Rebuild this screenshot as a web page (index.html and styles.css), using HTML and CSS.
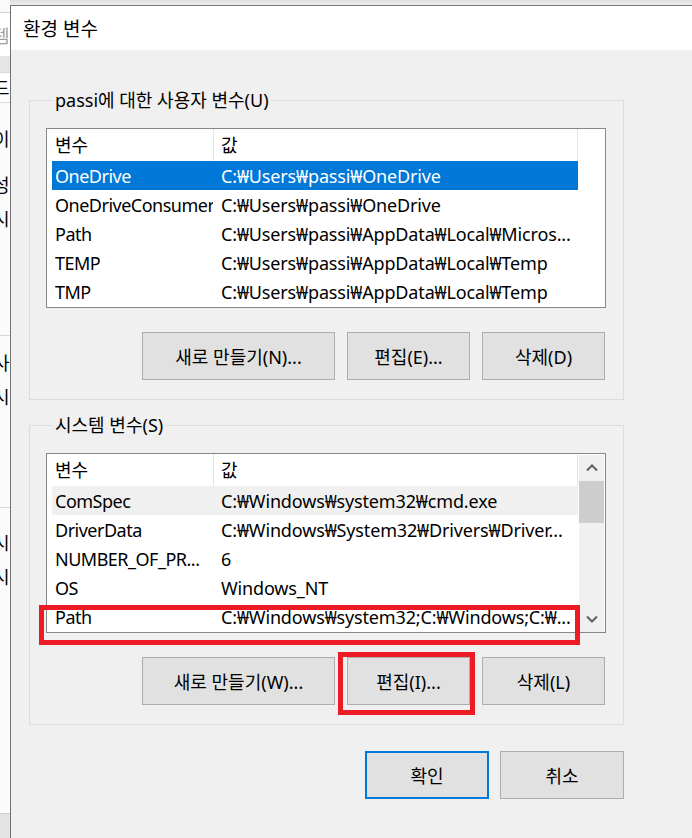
FILE: index.html
```html
<!DOCTYPE html>
<html lang="ko">
<head>
<meta charset="utf-8">
<title>환경 변수</title>
<link rel="stylesheet" href="styles.css">
</head>
<body>
<div class="screen">
  <div class="behind">
    <div class="bh-top"></div>
    <div class="bh-tabs"><span class="bh-ch faint">템</span></div>
    <div class="bh-band"></div>
    <div class="bh-tab"><span class="bh-ch">드 E</span></div>
    <div class="bh-panel">
      <span class="bh-ch l1">이</span>
      <span class="bh-ch l2">성</span>
      <span class="bh-ch l3">시</span>
      <div class="bh-sep s1"></div>
      <span class="bh-ch l4">사</span>
      <span class="bh-ch l5">시</span>
      <div class="bh-sep s2"></div>
      <span class="bh-ch l6">시</span>
      <span class="bh-ch l7">시</span>
    </div>
    <div class="bh-bottom"></div>
  </div>

  <div class="dialog">
    <div class="titlebar">환경 변수</div>
    <div class="dlg-body">
      <fieldset class="group">
        <legend>passi에 대한 사용자 변수(U)</legend>
        <div class="list">
          <div class="list-main">
            <div class="list-head">
              <div class="hc hc1">변수</div>
              <div class="hc hc2">값</div>
            </div>
            <div class="row sel"><span class="c1">OneDrive</span><span class="c2">C:₩Users₩passi₩OneDrive</span></div>
            <div class="row"><span class="c1">OneDriveConsumer</span><span class="c2">C:₩Users₩passi₩OneDrive</span></div>
            <div class="row"><span class="c1">Path</span><span class="c2">C:₩Users₩passi₩AppData₩Local₩Micros...</span></div>
            <div class="row"><span class="c1">TEMP</span><span class="c2">C:₩Users₩passi₩AppData₩Local₩Temp</span></div>
            <div class="row"><span class="c1">TMP</span><span class="c2">C:₩Users₩passi₩AppData₩Local₩Temp</span></div>
          </div>
        </div>
        <div class="btns">
          <button class="btn btn-wide">새로 만들기(N)...</button>
          <button class="btn">편집(E)...</button>
          <button class="btn">삭제(D)</button>
        </div>
      </fieldset>

      <fieldset class="group group-sys">
        <legend>시스템 변수(S)</legend>
        <div class="list">
          <div class="list-main">
            <div class="list-head">
              <div class="hc hc1">변수</div>
              <div class="hc hc2">값</div>
            </div>
            <div class="row hot"><span class="c1">ComSpec</span><span class="c2">C:₩Windows₩system32₩cmd.exe</span></div>
            <div class="row"><span class="c1">DriverData</span><span class="c2">C:₩Windows₩System32₩Drivers₩Driver...</span></div>
            <div class="row"><span class="c1">NUMBER_OF_PR...</span><span class="c2">6</span></div>
            <div class="row"><span class="c1">OS</span><span class="c2">Windows_NT</span></div>
            <div class="row"><span class="c1">Path</span><span class="c2">C:₩Windows₩system32;C:₩Windows;C:₩...</span></div>
          </div>
          <div class="scrollbar">
            <div class="sb-btn">
              <svg width="12" height="8" viewBox="0 0 12 8"><path d="M1 6.5 L6 1.5 L11 6.5" fill="none" stroke="#606060" stroke-width="2"/></svg>
            </div>
            <div class="sb-thumb"></div>
            <div class="sb-track"></div>
            <div class="sb-btn">
              <svg width="12" height="8" viewBox="0 0 12 8"><path d="M1 1.5 L6 6.5 L11 1.5" fill="none" stroke="#606060" stroke-width="2"/></svg>
            </div>
          </div>
        </div>
        <div class="btns">
          <button class="btn btn-wide">새로 만들기(W)...</button>
          <button class="btn">편집(I)...</button>
          <button class="btn">삭제(L)</button>
        </div>
      </fieldset>

      <div class="footer">
        <button class="btn btn-foot btn-default">확인</button>
        <button class="btn btn-foot">취소</button>
      </div>
    </div>
  </div>

  <div class="mark mark-path"></div>
  <div class="mark mark-edit"></div>
</div>
</body>
</html>
```

FILE: styles.css
```css
* { box-sizing: border-box; }

html, body {
  margin: 0;
  padding: 0;
}

body {
  font-family: "Noto Sans", "Noto Sans CJK KR", sans-serif;
  font-size: 18px;
  color: #000;
  background: #f0f0f0;
}

.screen {
  position: relative;
  width: 692px;
  height: 838px;
  overflow: hidden;
  display: flex;
  background: linear-gradient(#dedede, #ededed 5px);
}

/* window behind the dialog, only a 10px sliver visible */
.behind {
  width: 10px;
  flex: none;
  display: flex;
  flex-direction: column;
  overflow: hidden;
  background: #fff;
  font-size: 18px;
}

.bh-top {
  height: 13px;
  background: #fafafa;
  border-bottom: 1px solid #d5d5d5;
}

.bh-tabs {
  height: 43px;
  background: #fff;
  display: flex;
  align-items: center;
  padding-top: 3px;
}

.bh-band {
  height: 17px;
  background: #e5e5e5;
  border-bottom: 1px solid #d9d9d9;
}

.bh-tab {
  height: 30px;
  display: flex;
  align-items: center;
  background: #fff;
  border-bottom: 1px solid #d9d9d9;
}

.bh-ch {
  display: block;
  flex: none;
  margin-left: -7px;
  height: 22px;
  line-height: 22px;
  white-space: nowrap;
}

.bh-ch.faint { color: #a0a0a0; }

.bh-panel {
  flex: 1;
  display: flex;
  flex-direction: column;
  background: #fbfbfb;
}

.bh-panel .l1 { margin-top: 25px; }
.bh-panel .l2 { margin-top: 24px; }
.bh-panel .l3 { margin-top: 12px; }
.bh-sep { flex: none; height: 1px; background: #d6d6d6; }
.bh-panel .s1 { margin-top: 105px; }
.bh-panel .l4 { margin-top: 16px; }
.bh-panel .l5 { margin-top: 12px; }
.bh-panel .s2 { margin-top: 99px; }
.bh-panel .l6 { margin-top: 24px; }
.bh-panel .l7 { margin-top: 12px; }

.bh-bottom {
  height: 25px;
  flex: none;
  background: #e4e4e4;
  border-top: 1px solid #cfcfcf;
}

/* dialog */
.dialog {
  flex: 1;
  min-width: 0;
  margin-top: 5px;
  border-top: 1px solid #7a7a7a;
  border-left: 1px solid #707070;
  background: #f0f0f0;
  display: flex;
  flex-direction: column;
}

.titlebar {
  height: 44px;
  flex: none;
  background: #fff;
  display: flex;
  align-items: center;
  padding-left: 12px;
  font-size: 19px;
}

.dlg-body {
  padding: 39px 0 0 18px;
}

.group {
  width: 595px;
  margin: 0;
  padding: 16px 17px 19px 16px;
  border: 1px solid #dcdcdc;
  min-width: 0;
}

.group-sys {
  margin-top: 14px;
}

.group legend {
  margin-left: 7px;
  padding: 0 2px;
  line-height: 23px;
  font-size: 18px;
}

.list {
  width: 560px;
  height: 180px;
  border: 1px solid #828790;
  background: #fff;
  display: flex;
}

.list-main {
  flex: 1;
  min-width: 0;
}

.list-head {
  height: 32px;
  display: flex;
}

.hc {
  height: 32px;
  line-height: 32px;
  border-right: 1px solid #e5e5e5;
  white-space: nowrap;
}

.hc1 {
  width: 167px;
  padding-left: 8px;
}

.hc2 {
  width: 364px;
  padding-left: 7px;
}

.row {
  height: 29px;
  line-height: 29px;
  margin-left: 5px;
  width: 526px;
  display: flex;
  white-space: nowrap;
  padding-top: 1px;
}

.row.sel {
  background: #0078d7;
  color: #fff;
}

.row.hot {
  background: #f0f0f0;
}

.c1 {
  width: 161px;
  flex: none;
  padding-left: 3px;
  overflow: hidden;
  letter-spacing: -0.5px;
}

.c2 {
  flex: 1;
  padding-left: 8px;
  overflow: hidden;
  letter-spacing: -0.15px;
}

.scrollbar {
  width: 25px;
  flex: none;
  margin: 1px 1px 0 0;
  background: #f0f0f0;
  display: flex;
  flex-direction: column;
}

.sb-btn {
  height: 26px;
  display: flex;
  align-items: center;
  justify-content: center;
}

.sb-thumb {
  height: 42px;
  background: #cdcdcd;
}

.sb-track {
  flex: 1;
}

.btns {
  display: flex;
  justify-content: flex-end;
  gap: 12px;
  margin-top: 24px;
  padding-right: 1px;
}

.btn {
  width: 123px;
  height: 48px;
  margin: 0;
  padding: 0;
  background: #e1e1e1;
  border: 1px solid #adadad;
  font-family: "Noto Sans", "Noto Sans CJK KR", sans-serif;
  font-size: 18px;
  color: #000;
}

.btn-wide {
  width: 193px;
}

.footer {
  width: 595px;
  display: flex;
  justify-content: flex-end;
  gap: 11px;
  margin-top: 26px;
}

.btn-foot {
  width: 124px;
}

.btn-default {
  border: 2px solid #0078d7;
}

/* red annotation boxes drawn over the screenshot */
.mark {
  position: absolute;
  border: 5px solid #ed1c24;
}

.mark-path {
  left: 39px;
  top: 605px;
  width: 541px;
  height: 40px;
}

.mark-edit {
  left: 338px;
  top: 652px;
  width: 137px;
  height: 63px;
}
```
